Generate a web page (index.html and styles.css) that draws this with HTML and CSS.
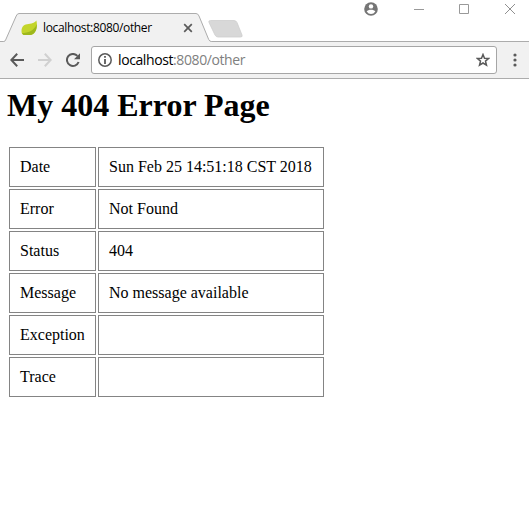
FILE: index.html
```html
<!DOCTYPE html>
<html lang="en">
<head>
<meta charset="utf-8">
<title>localhost:8080/other</title>
<link rel="stylesheet" href="styles.css">
</head>
<body>
<header class="browser">
  <div class="tabstrip">
    <div class="tab">
      <svg class="tab-shape" width="212" height="29" viewBox="0 0 212 29">
        <path d="M0 29 L0 28.5 H3.5 Q5 28.5 5.6 27 L16.2 3 Q17.2 .5 19 .5 H196 Q198 .5 199 3 L208.7 26.5 Q209.6 28.5 211.5 28.5 H212 V29Z" fill="#f1f1f1"/>
        <path d="M0 28.5 H3.5 Q5 28.5 5.6 27 L16.2 3 Q17.2 .5 19 .5 H196 Q198 .5 199 3 L208.7 26.5 Q209.6 28.5 211.5 28.5 H212" fill="none" stroke="#acacac"/>
      </svg>
      <svg class="favicon" width="17" height="16" viewBox="0 0 17 16">
        <path d="M15.4 .5 C17 7 15 14.2 9 15 H3 Q.5 14.5 .5 11.5 C.5 6 3.5 4.4 7.5 4 C12 3.6 14 2.5 15.4 .5Z" fill="#c3d52b"/>
        <path d="M15.8 4 C16 10 14 14.5 9 15 H2.5 L1 13 C7 13 13 11 15.8 4Z" fill="#9eb81d"/>
      </svg>
      <span class="tab-title">localhost:8080/other</span>
      <svg class="tab-close" width="10" height="10" viewBox="0 0 10 10"><path d="M1.2 1.2 L8.8 8.8 M8.8 1.2 L1.2 8.8" stroke="#5a5a5a" stroke-width="1.7"/></svg>
    </div>
    <svg class="new-tab" width="36" height="18" viewBox="0 0 36 18">
      <path d="M2.5 .5 H26 Q28 .5 29 2.5 L34 15 Q34.8 17 32.5 17 H10 Q8 17 7 15 L1 2.5 Q.2 .5 2.5 .5Z" fill="#d8d8d8" stroke="#cecece" stroke-width=".8"/>
    </svg>
    <div class="window-controls">
      <svg width="14" height="14" viewBox="0 0 14 14">
        <circle cx="7" cy="7" r="6.8" fill="#757575"/>
        <circle cx="7" cy="4.4" r="2.2" fill="#fff"/>
        <path d="M2.7 9.5 C4 7.3 10 7.3 11.3 9.5 Q9.7 12 7 12 Q4.3 12 2.7 9.5Z" fill="#fff"/>
      </svg>
      <svg width="10" height="10" viewBox="0 0 10 10"><path d="M0 5.5 H10" stroke="#999"/></svg>
      <svg width="10" height="10" viewBox="0 0 10 10"><path d="M.5 .5 H9.5 V9.5 H.5Z" fill="none" stroke="#999"/></svg>
      <svg width="10" height="10" viewBox="0 0 10 10"><path d="M0 0 L10 10 M10 0 L0 10" stroke="#909090"/></svg>
    </div>
  </div>
  <div class="toolbar">
    <nav class="nav">
      <svg width="14" height="14" viewBox="0 0 14 14"><path d="M14 7 H1.5 M7.2 .8 L1.3 7 L7.2 13.2" fill="none" stroke="#5a5a5a" stroke-width="2"/></svg>
      <svg width="14" height="14" viewBox="0 0 14 14"><path d="M0 7 H12.5 M6.8 .8 L12.7 7 L6.8 13.2" fill="none" stroke="#d0d0d0" stroke-width="2"/></svg>
      <svg width="14" height="14" viewBox="0 0 14 14"><path d="M12.6 9 A6 6 0 1 1 11.4 2.9" fill="none" stroke="#5a5a5a" stroke-width="2"/><path d="M14 .2 V6.2 H8Z" fill="#5a5a5a"/></svg>
    </nav>
    <div class="address">
      <svg width="14" height="14" viewBox="0 0 14 14"><circle cx="7" cy="7" r="6.2" fill="none" stroke="#5a5a5a" stroke-width="1.5"/><path d="M7 3 V4.7 M7 6 V11" stroke="#5a5a5a" stroke-width="1.8"/></svg>
      <span class="url">localhost<span class="url-rest">:8080/other</span></span>
      <svg class="star" width="14" height="14" viewBox="0 0 14 14"><path d="M7 1.5 L8.5 5.2 L12.6 5.5 L9.5 8.1 L10.5 12.2 L7 10 L3.5 12.2 L4.5 8.1 L1.4 5.5 L5.5 5.2Z" fill="none" stroke="#5a5a5a" stroke-width="1.5"/></svg>
    </div>
    <svg class="menu" width="4" height="14" viewBox="0 0 4 14" fill="#5a5a5a"><circle cx="2" cy="2" r="1.6"/><circle cx="2" cy="7" r="1.6"/><circle cx="2" cy="12" r="1.6"/></svg>
  </div>
</header>
<main class="page">
  <h1>My 404 Error Page</h1>
  <table class="details">
    <tr><td>Date</td><td>Sun Feb 25 14:51:18 CST 2018</td></tr>
    <tr><td>Error</td><td>Not Found</td></tr>
    <tr><td>Status</td><td>404</td></tr>
    <tr><td>Message</td><td>No message available</td></tr>
    <tr><td>Exception</td><td></td></tr>
    <tr><td>Trace</td><td></td></tr>
  </table>
</main>
</body>
</html>
```
FILE: styles.css
```css
* { box-sizing: border-box; }
body {
  margin: 0;
  background: #fff;
  color: #000;
  font-family: "Liberation Serif", serif;
  overflow: hidden;
}
svg { display: block; flex: none; }
.browser { font-family: "Open Sans", "Noto Sans", sans-serif; }
.tabstrip {
  display: flex;
  height: 42px;
  background: linear-gradient(#acacac, #acacac) bottom / 100% 1px no-repeat;
}
.tab {
  position: relative;
  display: flex;
  align-items: center;
  width: 212px;
  height: 29px;
  margin-top: 13px;
  padding-left: 21px;
}
.tab-shape { position: absolute; left: 0; top: 0; }
.favicon, .tab-title, .tab-close { position: relative; }
.tab-title {
  width: 140px;
  margin-left: 5px;
  font-size: 12px;
  line-height: 16px;
  letter-spacing: -0.35px;
  white-space: nowrap;
}
.new-tab { margin: 20px 0 0 -4px; }
.window-controls {
  display: flex;
  align-items: center;
  height: 14px;
  margin: 2px 14px 0 auto;
  gap: 35px;
}
.window-controls svg:first-child { margin-right: 1px; }
.window-controls svg:last-child { margin-left: 1px; }
.toolbar {
  display: flex;
  align-items: center;
  height: 37px;
  padding: 0 12px 0 10px;
  background: #f1f1f1;
  border-bottom: 1px solid #acacac;
}
.nav { display: flex; gap: 14px; }
.address {
  display: flex;
  align-items: center;
  width: 406px;
  height: 28px;
  margin-left: 11px;
  padding: 0 6px;
  background: #fff;
  border: 1px solid #a6a6a6;
  border-radius: 3px;
}
.url {
  margin-left: 6px;
  font-size: 14px;
  line-height: 20px;
  letter-spacing: -0.4px;
}
.url-rest { color: #808080; }
.star { margin-left: auto; }
.menu { margin-left: auto; }
.page { padding: 8px 7px; }
h1 {
  margin: 0 0 21px;
  font-size: 32px;
  line-height: 37px;
}
.details { border-spacing: 2px; font-size: 16px; }
.details td {
  height: 40px;
  padding: 0 10px;
  border: 1px solid #848484;
  line-height: 18px;
}
.details td:first-child { width: 87px; }
.details td:last-child { width: 226px; }
```
